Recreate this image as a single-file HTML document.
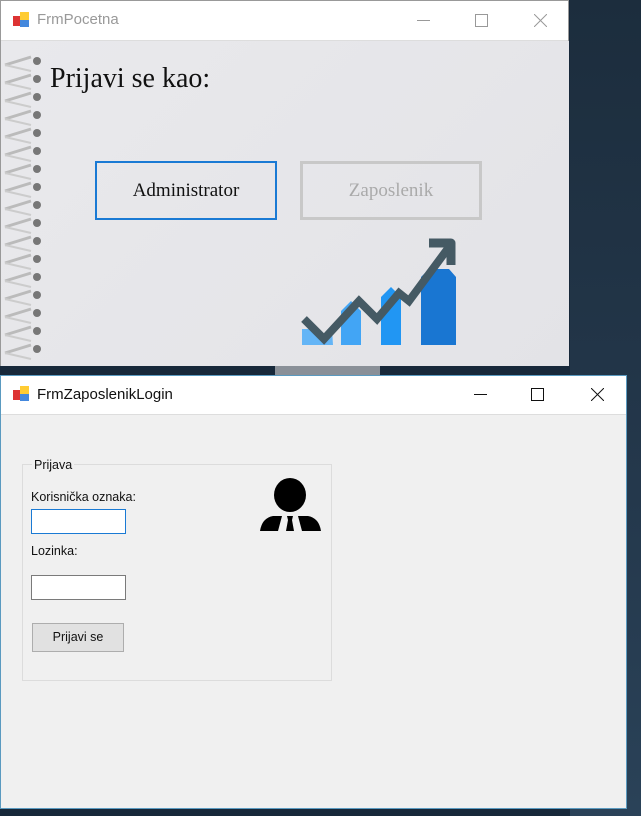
<!DOCTYPE html>
<html><head><meta charset="utf-8"><style>
body{margin:0;width:641px;height:816px;background:#17283a;position:relative;overflow:hidden;font-family:"Liberation Sans",sans-serif}
.w{position:absolute;background:#fff}
.tb{position:absolute;left:0;right:0;top:0;background:#fff;font-size:15px;color:#222}
.ico{position:absolute;left:12px;width:16px;height:16px}
</style></head><body>
<div style="position:absolute;left:570px;top:0;width:71px;height:816px;background:linear-gradient(#1c2d3d,#24384c 60%,#2a4258)"></div>
<div style="position:absolute;left:275px;top:366px;width:105px;height:10px;background:#8a9098"></div>
<!-- Window 1 -->
<div class="w" style="left:0;top:0;width:569px;height:366px;border:1px solid #999;box-sizing:border-box">
 <div class="tb" style="height:39px;border-bottom:1px solid #ddd">
  <svg class="ico" style="top:11px" viewBox="0 0 16 16"><rect x="0" y="4" width="7" height="10" fill="#d33"/><rect x="7" y="0" width="9" height="8" fill="#fc3"/><rect x="7" y="8" width="9" height="7" fill="#48d"/></svg>
  <span style="position:absolute;left:36px;top:10px;color:#999;font-size:15px">FrmPocetna</span>
  <div style="position:absolute;left:416px;top:19px;width:13px;height:1px;background:#999"></div>
  <div style="position:absolute;left:474px;top:13px;width:11px;height:11px;border:1px solid #999"></div>
  <svg style="position:absolute;left:533px;top:13px" width="13" height="13"><path d="M0 0L13 13M13 0L0 13" stroke="#999"/></svg>
 </div>
 <div style="position:absolute;left:0;top:40px;width:568px;height:325px;background:linear-gradient(135deg,#e9e9ec,#e3e3e7)"></div>
 <svg style="position:absolute;left:0;top:52px" width="44" height="314">
  <g id="r">
   <path d="M4 12 L30 4" stroke="#bbb" stroke-width="3" fill="none"/>
   <path d="M4 12 L30 18" stroke="#ccc" stroke-width="2" fill="none"/>
   <circle cx="36" cy="8" r="4" fill="#777"/>
  </g>
  <use href="#r" y="18"/><use href="#r" y="36"/><use href="#r" y="54"/><use href="#r" y="72"/><use href="#r" y="90"/><use href="#r" y="108"/><use href="#r" y="126"/><use href="#r" y="144"/><use href="#r" y="162"/><use href="#r" y="180"/><use href="#r" y="198"/><use href="#r" y="216"/><use href="#r" y="234"/><use href="#r" y="252"/><use href="#r" y="270"/><use href="#r" y="288"/>
 </svg>
 <div style="position:absolute;left:49px;top:62px;font-family:'Liberation Serif',serif;font-size:28px;color:#111">Prijavi se kao:</div>
 <div style="position:absolute;left:94px;top:160px;width:182px;height:59px;border:2px solid #1a7ad4;box-sizing:border-box;font-family:'Liberation Serif',serif;font-size:19px;line-height:55px;text-align:center;color:#111">Administrator</div>
 <div style="position:absolute;left:299px;top:160px;width:182px;height:59px;border:3px solid #c8c8c8;box-sizing:border-box;font-family:'Liberation Serif',serif;font-size:19px;line-height:53px;text-align:center;color:#aaa">Zaposlenik</div>
 <svg style="position:absolute;left:298px;top:234px" width="160" height="112">
  <path d="M3 94 L17 94 L25 102 L33 94 L34 110 L3 110Z" fill="#64b5f6"/>
  <path d="M42 76 L52 66 L62 76 L62 110 L42 110Z" fill="#42a5f5"/>
  <path d="M82 62 L92 52 L102 62 L102 110 L82 110Z" fill="#2196f3"/>
  <path d="M122 42 L130 34 L150 34 L157 42 L157 110 L122 110Z" fill="#1976d2"/>
  <path d="M5 84 L25 104 L60 66 L78 84 L100 58 L110 66 L150 12" stroke="#455a64" stroke-width="8" fill="none"/>
  <path d="M130 8 L152 8 L152 30" stroke="#455a64" stroke-width="9" fill="none" stroke-linejoin="round"/>
 </svg>
</div>
<!-- Window 2 -->
<div class="w" style="left:0;top:375px;width:627px;height:434px;border:1px solid #5a9ac0;box-sizing:border-box;background:#f0f0f0">
 <div class="tb" style="height:38px;border-bottom:1px solid #ddd">
  <svg class="ico" style="top:10px" viewBox="0 0 16 16"><rect x="0" y="4" width="7" height="10" fill="#d33"/><rect x="7" y="0" width="9" height="8" fill="#fc3"/><rect x="7" y="8" width="9" height="7" fill="#48d"/></svg>
  <span style="position:absolute;left:36px;top:10px;font-size:15px;color:#111">FrmZaposlenikLogin</span>
  <div style="position:absolute;left:473px;top:18px;width:13px;height:1px;background:#111"></div>
  <div style="position:absolute;left:530px;top:12px;width:11px;height:11px;border:1px solid #111"></div>
  <svg style="position:absolute;left:590px;top:12px" width="13" height="13"><path d="M0 0L13 13M13 0L0 13" stroke="#111"/></svg>
 </div>
 <div style="position:absolute;left:21px;top:88px;width:308px;height:215px;border:1px solid #dcdcdc"></div>
 <span style="position:absolute;left:31px;top:82px;font-size:12.5px;background:#f0f0f0;padding:0 2px;color:#111">Prijava</span>
 <span style="position:absolute;left:30px;top:114px;font-size:12.5px;color:#111">Korisnička oznaka:</span>
 <div style="position:absolute;left:30px;top:133px;width:95px;height:25px;border:1px solid #1a7ad4;box-sizing:border-box;background:#fff"></div>
 <span style="position:absolute;left:30px;top:168px;font-size:12.5px;color:#111">Lozinka:</span>
 <div style="position:absolute;left:30px;top:199px;width:95px;height:25px;border:1px solid #7a7a7a;box-sizing:border-box;background:#fff"></div>
 <div style="position:absolute;left:31px;top:247px;width:92px;height:29px;border:1px solid #adadad;box-sizing:border-box;background:#e1e1e1;font-size:12.5px;text-align:center;line-height:27px;color:#111">Prijavi se</div>
 <svg style="position:absolute;left:258px;top:102px" width="64" height="54">
  <ellipse cx="31" cy="17" rx="16" ry="17" fill="#000"/>
  <path d="M1 53 Q3 40 14 38 L23 38 L19 53Z M39 38 L49 38 Q60 40 62 53 L43 53Z M28 38 L34 38 L33 42 L35 53 L27 53 L29 42Z" fill="#000"/>
 </svg>
</div>
</body></html>
